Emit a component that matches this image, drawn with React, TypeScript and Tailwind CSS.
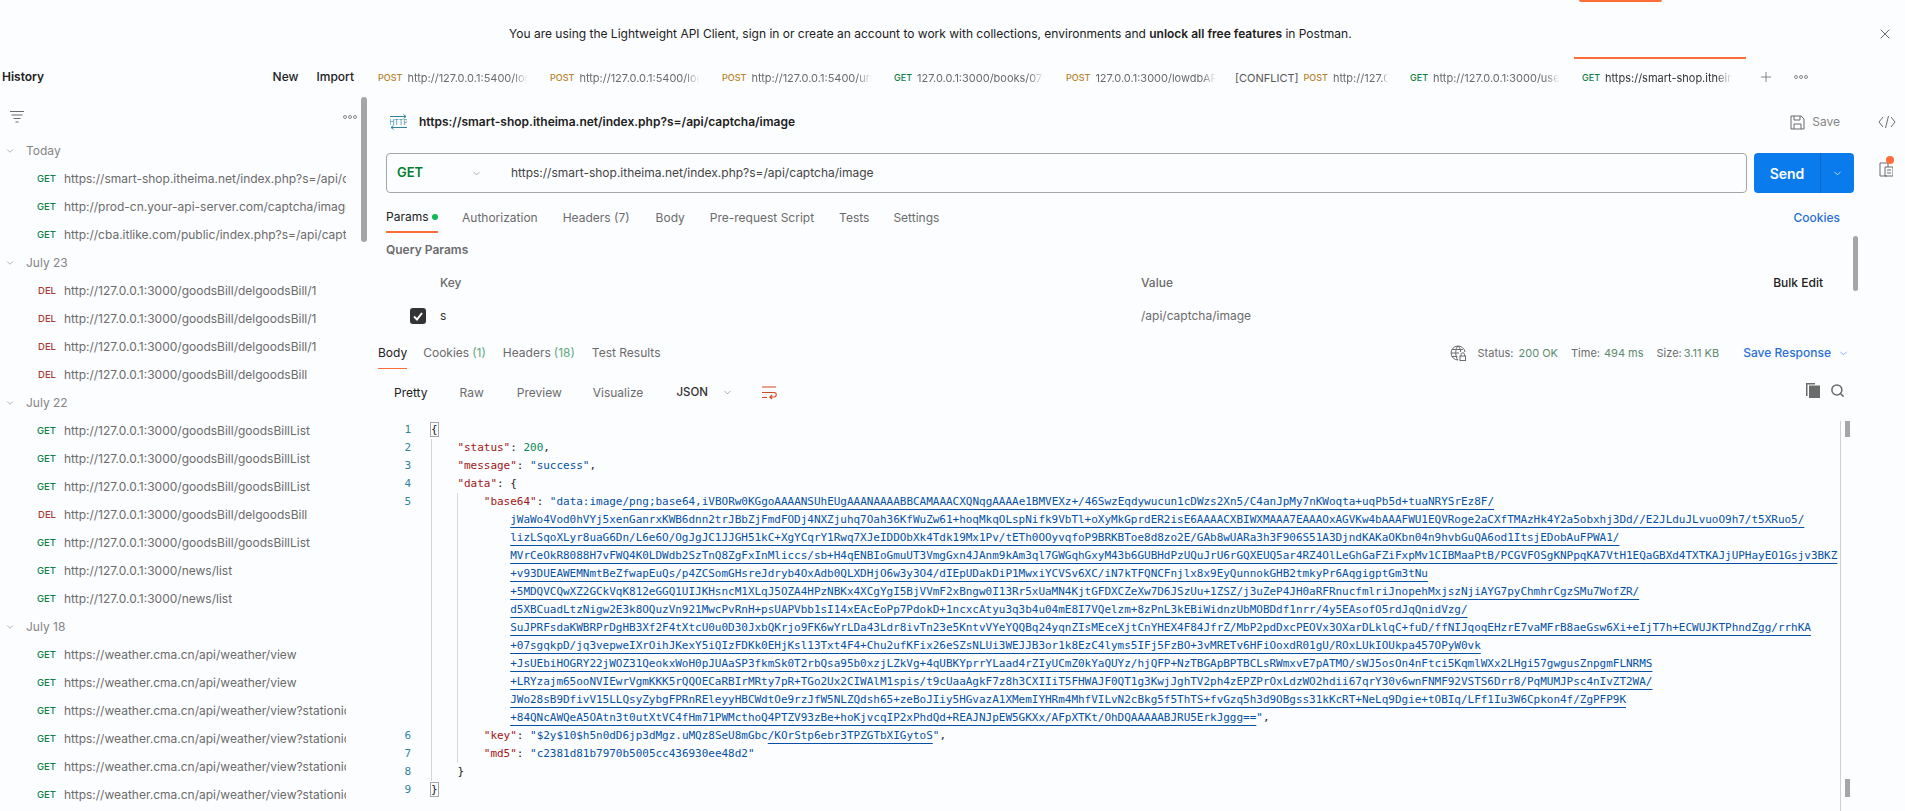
import React from "react";
import { ChevronDown, X, Plus, Search } from "lucide-react";

const Dots = ({ className = "" }: { className?: string }) => (
  <svg width="14" height="4" viewBox="0 0 14 4" className={className} fill="none" stroke="#6b6b6b" strokeWidth="0.8">
    <circle cx="2" cy="2" r="1.5" />
    <circle cx="7" cy="2" r="1.5" />
    <circle cx="12" cy="2" r="1.5" />
  </svg>
);

const methodColor: Record<string, string> = {
  GET: "text-[#0b8043]",
  POST: "text-[#b5842a]",
  DEL: "text-[#a93a34]",
};

const tabs = [
  { m: "POST", u: "http://127.0.0.1:5400/login" },
  { m: "POST", u: "http://127.0.0.1:5400/login" },
  { m: "POST", u: "http://127.0.0.1:5400/unregister" },
  { m: "GET", u: "127.0.0.1:3000/books/0752" },
  { m: "POST", u: "127.0.0.1:3000/lowdbAPI/add" },
  { m: "POST", u: "http://127.0.0.1:3000/login", c: true },
  { m: "GET", u: "http://127.0.0.1:3000/user/list" },
  { m: "GET", u: "https://smart-shop.itheima.net/index", a: true },
];

type H = { t: string; r: [string, string][] };
const bill = "http://127.0.0.1:3000/goodsBill/";
const wea = "https://weather.cma.cn/api/weather/view";
const history: H[] = [
  {
    t: "Today",
    r: [
      ["GET", "https://smart-shop.itheima.net/index.php?s=/api/captcha/image"],
      ["GET", "http://prod-cn.your-api-server.com/captcha/image"],
      ["GET", "http://cba.itlike.com/public/index.php?s=/api/captcha/image"],
    ],
  },
  {
    t: "July 23",
    r: [
      ["DEL", bill + "delgoodsBill/1"],
      ["DEL", bill + "delgoodsBill/1"],
      ["DEL", bill + "delgoodsBill/1"],
      ["DEL", bill + "delgoodsBill"],
    ],
  },
  {
    t: "July 22",
    r: [
      ["GET", bill + "goodsBillList"],
      ["GET", bill + "goodsBillList"],
      ["GET", bill + "goodsBillList"],
      ["DEL", bill + "delgoodsBill"],
      ["GET", bill + "goodsBillList"],
      ["GET", "http://127.0.0.1:3000/news/list"],
      ["GET", "http://127.0.0.1:3000/news/list"],
    ],
  },
  {
    t: "July 18",
    r: [
      ["GET", wea],
      ["GET", wea],
      ["GET", wea + "?stationid=58367"],
      ["GET", wea + "?stationid=58367"],
      ["GET", wea + "?stationid=58367"],
      ["GET", wea + "?stationid=58367"],
    ],
  },
];

const wrapped = [
  "jWaWo4Vod0hVYj5xenGanrxKWB6dnn2trJBbZjFmdFODj4NXZjuhq7Oah36KfWuZw61+hoqMkqOLspNifk9VbTl+oXyMkGprdER2isE6AAAACXBIWXMAAA7EAAAOxAGVKw4bAAAFWU1EQVRoge2aCXfTMAzHk4Y2a5obxhj3Dd//E2JLduJLvuoO9h7/t5XRuo5/",
  "lizLSqoXLyr8uaG6Dn/L6e6O/OgJgJC1JJGH51kC+XgYCqrY1Rwq7XJeIDDObXk4Tdk19Mx1Pv/tETh0OOyvqfoP9BRKBToe8d8zo2E/GAb8wUARa3h3F906S51A3DjndKAKaOKbn04n9hvbGuQA6od1ItsjEDobAuFPWA1/",
  "MVrCeOkR8088H7vFWQ4K0LDWdb2SzTnQ8ZgFxInMliccs/sb+H4qENBIoGmuUT3VmgGxn4JAnm9kAm3ql7GWGqhGxyM43b6GUBHdPzUQuJrU6rGQXEUQ5ar4RZ4OlLeGhGaFZiFxpMv1CIBMaaPtB/PCGVFOSgKNPpqKA7VtH1EQaGBXd4TXTKAJjUPHayEO1Gsjv3BKZ",
  "+v93DUEAWEMNmtBeZfwapEuQs/p4ZCSomGHsreJdryb4OxAdb0QLXDHjO6w3y3O4/dIEpUDakDiP1MwxiYCVSv6XC/iN7kTFQNCFnjlx8x9EyQunnokGHB2tmkyPr6AqgigptGm3tNu",
  "+5MDQVCQwXZ2GCkVqK812eGGQ1UIJKHsncM1XLqJ5OZA4HPzNBKx4XCgYgI5BjVVmF2xBngw0I13Rr5xUaMN4KjtGFDXCZeXw7D6JSzUu+1ZSZ/j3uZeP4JH0aRFRnucfmlriJnopehMxjszNjiAYG7pyChmhrCgzSMu7WofZR/",
  "d5XBCuadLtzNigw2E3k8OQuzVn921MwcPvRnH+psUAPVbb1sI14xEAcEoPp7PdokD+1ncxcAtyu3q3b4u04mE8I7VQelzm+8zPnL3kEBiWidnzUbMOBDdf1nrr/4y5EAsofO5rdJqQnidVzg/",
  "SuJPRFsdaKWBRPrDgHB3Xf2F4tXtcU0u0D30JxbQKrjo9FK6wYrLDa43Ldr8ivTn23e5KntvVYeYQQBq24yqnZIsMEceXjtCnYHEX4F84JfrZ/MbP2pdDxcPEOVx3OXarDLklqC+fuD/ffNIJqoqEHzrE7vaMFrB8aeGsw6Xi+eIjT7h+ECWUJKTPhndZgg/rrhKA",
  "+07sgqkpD/jq3vepweIXrOihJKexY5iQIzFDKk0EHjKsl13Txt4F4+Chu2ufKFix26eSZsNLUi3WEJJB3or1k8EzC4lyms5IFj5FzBO+3vMRETv6HFiOoxdR01gU/ROxLUkIOUkpa457OPyW0vk",
  "+JsUEbiHOGRY22jWOZ31QeokxWoH0pJUAaSP3fkmSk0T2rbQsa95b0xzjLZkVg+4qUBKYprrYLaad4rZIyUCmZ0kYaQUYz/hjQFP+NzTBGApBPTBCLsRWmxvE7pATMO/sWJ5osOn4nFtci5KqmlWXx2LHgi57gwgusZnpgmFLNRMS",
  "+LRYzajm65ooNVIEwrVgmKKK5rQQOECaRBIrMRty7pR+TGo2Ux2CIWAlM1spis/t9cUaaAgkF7z8h3CXIIiT5FHWAJF0QT1g3KwjJghTV2ph4zEPZPrOxLdzWO2hdii67qrY30v6wnFNMF92VSTS6Drr8/PqMUMJPsc4nIvZT2WA/",
  "JWo28sB9DfivV15LLQsyZybgFPRnREleyyHBCWdtOe9rzJfW5NLZQdsh65+zeBoJIiy5HGvazA1XMemIYHRm4MhfVILvN2cBkg5f5ThTS+fvGzq5h3d9OBgss31kKcRT+NeLq9Dgie+tOBIq/LFf1Iu3W6Cpkon4f/ZgPFP9K",
  "+84QNcAWQeA5OAtn3t0utXtVC4fHm71PWMcthoQ4PTZV93zBe+hoKjvcqIP2xPhdQd+REAJNJpEW5GKXx/AFpXTKt/OhDQAAAAABJRU5ErkJggg==",
];

const link = "underline underline-offset-[4px] decoration-[#0451a5] decoration-1 [text-decoration-skip-ink:none]";
const K = ({ children }: { children: React.ReactNode }) => <span className="text-[#a31515]">{children}</span>;
const S = ({ children }: { children: React.ReactNode }) => <span className="text-[#0451a5]">{children}</span>;
const Cl = ({ children }: { children: React.ReactNode }) => <span className={"text-[#0451a5] " + link}>{children}</span>;

const Row = ({ n, indent = 0, children }: { n?: number; indent?: number; children: React.ReactNode }) => (
  <div className="flex h-[18px] items-center whitespace-pre">
    <span className="w-[61px] shrink-0 pr-[20px] text-right text-[#30829e]">{n ?? ""}</span>
    <span style={{ paddingLeft: indent * 6.6 }}>{children}</span>
  </div>
);

export default function App() {
  return (
    <div className="flex h-[811px] w-[1905px] flex-col overflow-hidden bg-[#fcfdff] font-['Inter',sans-serif] text-[12px] text-[#6b6b6b]">
      {/* banner */}
      <div className="relative flex h-[57px] shrink-0 items-center pt-[11px] pl-[509px]">
        <div className="absolute left-[1579px] top-0 h-[2px] w-[83px] rounded-b-sm bg-[#ff6c37]" />
        <span className="text-[#212121]">
          You are using the Lightweight API Client, sign in or create an account to work with collections, environments and{" "}
          <span className="font-semibold">unlock all free features</span> in Postman.
        </span>
        <X className="absolute left-[1877px] top-[26px] text-[#444]" size={16} strokeWidth={1.2} />
      </div>

      <div className="flex min-h-0 flex-1">
        {/* sidebar */}
        <aside className="relative flex w-[370px] shrink-0 flex-col overflow-hidden">
          <div className="flex h-[40px] shrink-0 items-center font-medium text-[#212121]">
            <span className="ml-[2px] font-semibold">History</span>
            <span className="ml-auto">New</span>
            <span className="ml-[18px] mr-[16px]">Import</span>
          </div>
          <div className="flex h-[40px] shrink-0 items-center pl-[10px] pr-[13px]">
            <svg width="14" height="14" viewBox="0 0 14 14" fill="none" stroke="#6b6b6b" strokeWidth="1">
              <path d="M0 1.5h14M1.5 5h11M3.5 8.5h7M5.5 12h3" />
            </svg>
            <Dots className="ml-auto" />
          </div>
          <div className="absolute left-[361px] top-[40px] h-[145px] w-[6px] rounded-full bg-[#a6a6a6]" />
          {history.map((g) => (
            <div key={g.t}>
              <div className="flex h-[28px] items-center text-[#858585]">
                <ChevronDown className="ml-[5px] mr-[11px]" size={10} strokeWidth={1.2} color="#6b6b6b" />
                <span>{g.t}</span>
              </div>
              {g.r.map(([m, u], i) => (
                <div key={i} className="flex h-[28px] items-center">
                  <span className={"w-[56px] shrink-0 pr-0 text-right text-[9.5px] font-medium " + methodColor[m]}>{m}</span>
                  <span className="ml-[8px] w-[282px] overflow-hidden whitespace-nowrap">{u}</span>
                </div>
              ))}
            </div>
          ))}
        </aside>

        {/* main */}
        <main className="relative flex min-w-0 flex-1 flex-col">
          {/* tabs */}
          <div className="flex h-[40px] shrink-0 items-center text-[11px]">
            {tabs.map((t, i) => (
              <div
                key={i}
                className={
                  "flex h-full w-[172px] shrink-0 items-center border-t-2 pr-[14px] " +
                  (t.c ? "pl-[5px] " : "pl-[8px] ") +
                  (t.a ? "border-[#ff6c37] text-[#333]" : "border-transparent")
                }
              >
                {t.c && <span className="mr-[5px] whitespace-nowrap text-[#555]">[CONFLICT]</span>}
                <span className={"mr-[5px] text-[9px] font-medium " + methodColor[t.m]}>{t.m}</span>
                <span className="min-w-0 flex-1 overflow-hidden whitespace-nowrap [mask-image:linear-gradient(to_right,black_88%,transparent)]">
                  {t.u}
                </span>
              </div>
            ))}
            <Plus className="ml-[12px] text-[#6b6b6b]" size={16} strokeWidth={1.2} />
            <Dots className="ml-[20px]" />
          </div>

          {/* title row */}
          <div className="flex h-[50px] shrink-0 items-center pl-[20px] pr-[9px]">
            <svg width="17" height="16" viewBox="0 0 17 16" fill="none" stroke="#30829e" strokeWidth="1">
              <path d="M0 2.500h16M13.500 0.500l2.500 2-2.500 2M17 13.500H1M3.500 11.500l-2.500 2 2.500 2" />
              <text x="8.500" y="10.500" textAnchor="middle" fontSize="7" fill="#30829e" stroke="none" fontFamily="Inter, sans-serif">
                HTTP
              </text>
            </svg>
            <span className="ml-[12px] font-semibold text-[#212121]">https://smart-shop.itheima.net/index.php?s=/api/captcha/image</span>
            <svg className="ml-auto" width="15" height="15" viewBox="0 0 15 15" fill="none" stroke="#6b6b6b" strokeWidth="1">
              <path d="M1 1h10l3 3v10H1z" />
              <path d="M4 1v4h6V1M4 14V9h7v5" />
            </svg>
            <span className="ml-[7px] text-[#858585]">Save</span>
            <svg className="ml-[38px]" width="18" height="14" viewBox="0 0 18 14" fill="none" stroke="#6b6b6b" strokeWidth="1">
              <path d="M5 2 1 7l4 5M13 2l4 5-4 5M10.5 1l-3 12" />
            </svg>
          </div>

          {/* url row */}
          <div className="mt-[6px] flex h-[40px] shrink-0 pl-[16px] pr-[12px]">
            <div className="flex min-w-0 flex-1 items-center rounded-[4px] border border-[#a6a6a6] pl-[10px]">
              <span className="w-[74px] text-[13px] font-semibold text-[#007f31]">GET</span>
              <ChevronDown size={11} strokeWidth={1.2} color="#6b6b6b" />
              <span className="ml-[29px] text-[#444]">https://smart-shop.itheima.net/index.php?s=/api/captcha/image</span>
            </div>
            <div className="ml-[7px] flex w-[100px] shrink-0 overflow-hidden rounded-[4px] bg-[#097bed] text-white">
              <span className="flex w-[67px] items-center justify-center border-r border-[#0a68c4] text-[14px] font-semibold">Send</span>
              <span className="flex flex-1 items-center justify-center">
                <ChevronDown size={11} strokeWidth={1.5} />
              </span>
            </div>
            <div className="relative ml-[25px] mt-[9px] h-[15px] w-[14px]">
              <svg width="14" height="15" viewBox="0 0 14 15" fill="none" stroke="#6b6b6b" strokeWidth="1">
                <path d="M8 14H1V1h8v4" />
                <path d="M6 5h8v9H6zM8 8h4M8 11h4" />
              </svg>
              <span className="absolute -top-[6px] left-[7px] h-[8px] w-[8px] rounded-full bg-[#ff6c37]" />
            </div>
          </div>

          {/* request tabs */}
          <div className="flex h-[40px] shrink-0 items-end pl-[16px] pr-[65px]">
            <span className="flex h-[30px] w-[52px] items-center border-b-2 border-[#ff6c37] text-[#212121]">
              Params
              <span className="ml-[3px] h-[6px] w-[6px] rounded-full bg-[#0cbb52]" />
            </span>
            <span className="ml-[24px] flex h-[30px] items-center">Authorization</span>
            <span className="ml-[25px] flex h-[30px] items-center">Headers (7)</span>
            <span className="ml-[26px] flex h-[30px] items-center">Body</span>
            <span className="ml-[25px] flex h-[30px] items-center">Pre-request Script</span>
            <span className="ml-[25px] flex h-[30px] items-center">Tests</span>
            <span className="ml-[24px] flex h-[30px] items-center">Settings</span>
            <span className="ml-auto flex h-[30px] items-center font-medium text-[#2a6fd6]">Cookies</span>
          </div>

          <div className="flex h-[34px] shrink-0 items-center pl-[16px] font-semibold">Query Params</div>

          {/* params table */}
          <div className="flex h-[32px] shrink-0 items-center pl-[70px] font-medium">
            <span className="w-[701px]">Key</span>
            <span>Value</span>
            <span className="ml-auto mr-[82px] text-[#212121]">Bulk Edit</span>
          </div>
          <div className="flex h-[34px] shrink-0 items-center pl-[40px]">
            <span className="flex h-[16px] w-[16px] items-center justify-center rounded-[3px] bg-[#333]">
              <svg width="12" height="12" viewBox="0 0 12 12" fill="none" stroke="#fff" strokeWidth="2">
                <path d="M2 6.5 5 9.5 10 3" />
              </svg>
            </span>
            <span className="ml-[14px] w-[701px] text-[#333]">s</span>
            <span>/api/captcha/image</span>
          </div>
          <div className="absolute left-[1483px] top-[179px] h-[55px] w-[5px] rounded-full bg-[#a6a6a6]" />

          {/* response tabs */}
          <div className="mt-[4px] flex h-[32px] shrink-0 pl-[8px] pr-[56px]">
            <span className="flex h-full items-center border-b-[1.5px] border-[#ff6c37] text-[#212121]">Body</span>
            <span className="ml-[16px] flex items-center">
              Cookies <span className="ml-[3px] text-[#5fa77d]">(1)</span>
            </span>
            <span className="ml-[17px] flex items-center">
              Headers <span className="ml-[3px] text-[#5fa77d]">(18)</span>
            </span>
            <span className="ml-[17px] flex items-center">Test Results</span>
            <span className="ml-auto flex items-center">
              <svg width="16" height="16" viewBox="0 0 16 16" fill="none" stroke="#6b6b6b" strokeWidth="1">
                <path d="M8 15A7 7 0 1 1 15 7M1 8h8M1.800 4.500h11M1.800 11.500h5.500M8 1C5 3 5 12 8 15M8 1c1.500 1 2.500 3 2.700 6" />
                <rect x="10" y="11" width="5.500" height="4.500" />
                <path d="M11 11V9.500a1.700 1.700 0 0 1 3.500 0V11" />
              </svg>
              <span className="ml-[12px] text-[11px]">Status:</span>
              <span className="ml-[5px] text-[11px] text-[#5e8a6e]">200 OK</span>
              <span className="ml-[13px] text-[11px]">Time:</span>
              <span className="ml-[4px] text-[11px] text-[#5e8a6e]">494 ms</span>
              <span className="ml-[13px] text-[11px]">Size:</span>
              <span className="ml-[2px] text-[11px] text-[#5e8a6e]">3.11 KB</span>
              <span className="ml-[24px] font-medium text-[#2a6fd6]">Save Response</span>
              <ChevronDown className="ml-[7px]" size={11} strokeWidth={1.2} color="#2a6fd6" />
            </span>
          </div>

          {/* viewer tabs */}
          <div className="flex h-[52px] shrink-0 items-start pl-[24px] pr-[60px] pt-[15px]">
            <span className="text-[#212121]">Pretty</span>
            <span className="ml-[32px]">Raw</span>
            <span className="ml-[33px]">Preview</span>
            <span className="ml-[31px]">Visualize</span>
            <span className="ml-[33px] text-[11.5px] font-medium text-[#333]">JSON</span>
            <ChevronDown className="ml-[14px] mt-[3px]" size={11} strokeWidth={1.2} />
            <svg className="ml-[28px] mt-[1px]" width="16" height="16" viewBox="0 0 16 16" fill="none" stroke="#d14a1f" strokeWidth="1.100">
              <path d="M1 2h14M1 7.500h12a2 2 0 0 1 0 4.500H9l2-2M9 12l2 2M1 12.500h5" />
            </svg>
            <span className="ml-auto -mt-[2px] flex items-center gap-[10px]">
              <svg width="14" height="16" viewBox="0 0 14 16" fill="#6b6b6b">
                <path d="M0 1h9v1.500H1.500V14H0z" />
                <path d="M3 3.500h11V16H3z" />
              </svg>
              <Search size={15} strokeWidth={2.4} color="#6b6b6b" />
            </span>
          </div>

          {/* code */}
          <div className="relative min-h-0 flex-1 overflow-hidden font-['DejaVu_Sans_Mono',monospace] text-[11px] leading-[18px] tracking-[-0.02px] text-[#222]">
            <div className="absolute left-[61px] top-[18px] h-[342px] w-px bg-[#d6d6d6]" />
            <div className="absolute left-[87px] top-[72px] h-[270px] w-px bg-[#d6d6d6]" />
            <div className="absolute bottom-0 left-[1470px] top-0 w-px bg-[#d0d0d0]" />
            <div className="absolute left-[1475px] top-0 h-[16px] w-[5px] bg-[#a6a6a6]" />
            <div className="absolute left-[1475px] top-[358px] h-[18px] w-[5px] bg-[#a6a6a6]" />
            <Row n={1}>
              <span className="outline outline-[#a6a6a6]">{"{"}</span>
            </Row>
            <Row n={2} indent={4}>
              <K>"status"</K>: <span className="text-[#098658]">200</span>,
            </Row>
            <Row n={3} indent={4}>
              <K>"message"</K>: <S>"success"</S>,
            </Row>
            <Row n={4} indent={4}>
              <K>"data"</K>: {"{"}
            </Row>
            <Row n={5} indent={8}>
              <K>"base64"</K>: <S>"data:image</S>
              <Cl>/png;base64,iVBORw0KGgoAAAANSUhEUgAAANAAAABBCAMAAACXQNqgAAAAe1BMVEXz+/46SwzEqdywucun1cDWzs2Xn5/C4anJpMy7nKWoqta+uqPb5d+tuaNRYSrEz8F/</Cl>
            </Row>
            {wrapped.map((l, i) => (
              <Row key={i} indent={12}>
                <Cl>{l}</Cl>
                {i === wrapped.length - 1 && (
                  <>
                    <S>"</S>,
                  </>
                )}
              </Row>
            ))}
            <Row n={6} indent={8}>
              <K>"key"</K>: <S>"$2y$10$h5n0dD6jp3dMgz.uMQz8SeU8mGbc</S>
              <Cl>/KOrStp6ebr3TPZGTbXIGytoS</Cl>
              <S>"</S>,
            </Row>
            <Row n={7} indent={8}>
              <K>"md5"</K>: <S>"c2381d81b7970b5005cc436930ee48d2"</S>
            </Row>
            <Row n={8} indent={4}>
              {"}"}
            </Row>
            <Row n={9}>
              <span className="outline outline-[#a6a6a6]">{"}"}</span>
            </Row>
          </div>
        </main>
      </div>
    </div>
  );
}
